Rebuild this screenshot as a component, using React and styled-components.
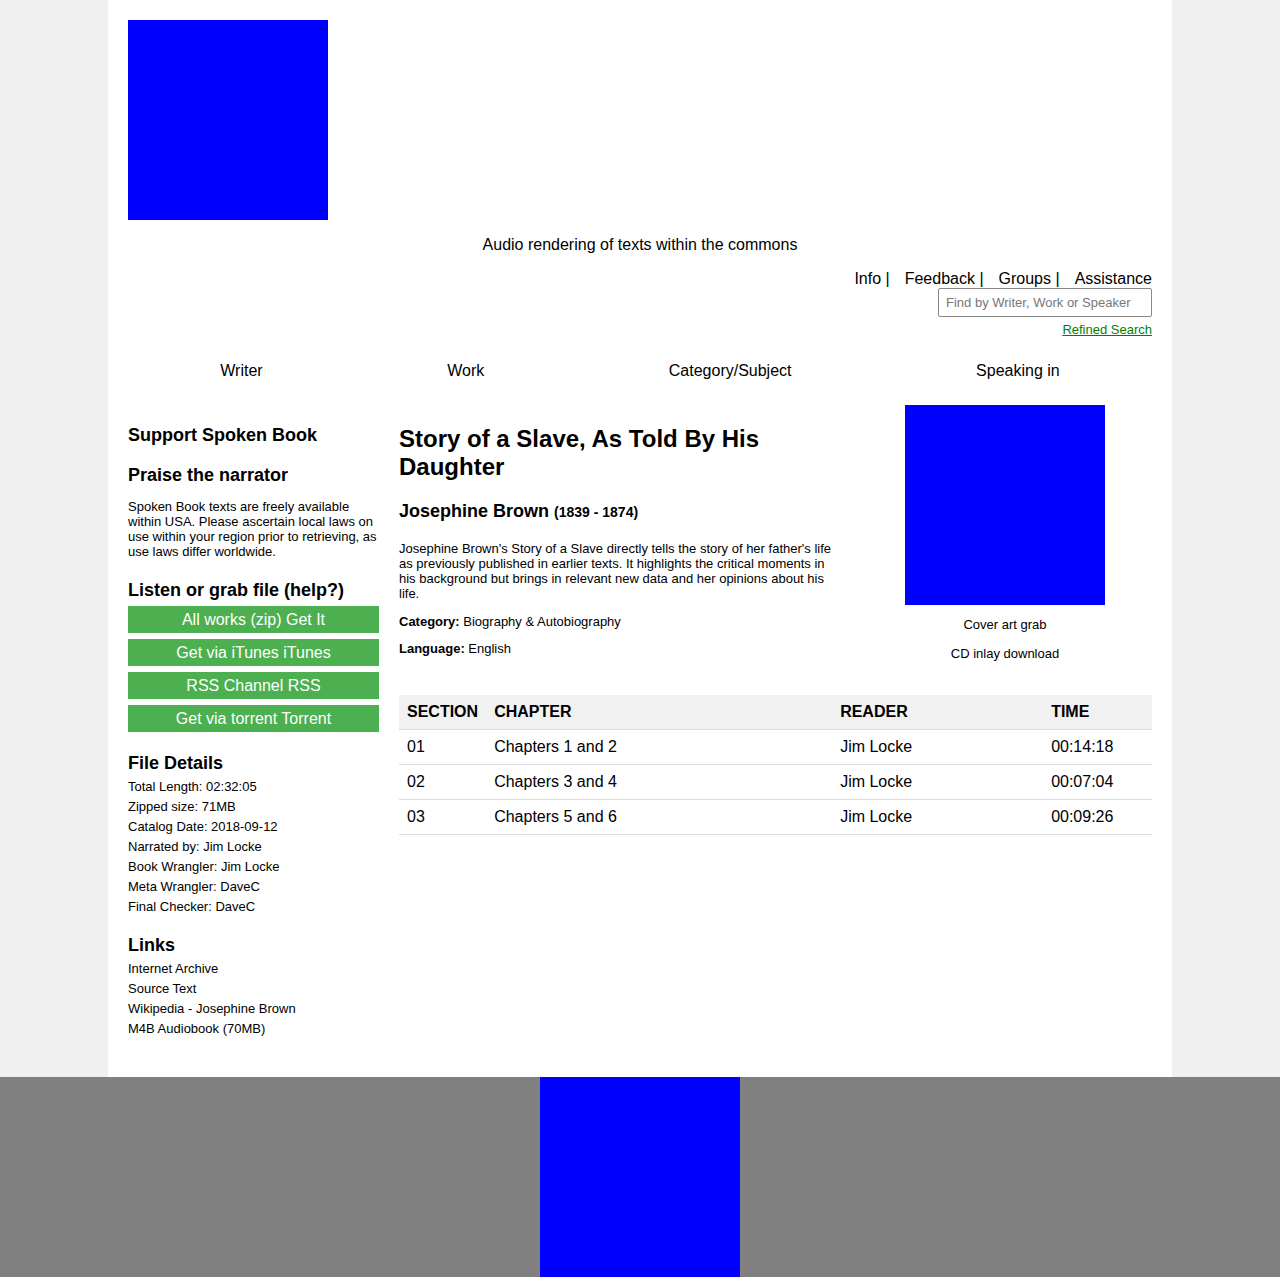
import styled, { createGlobalStyle } from 'styled-components';

const GlobalStyle = createGlobalStyle`
  body {
    margin: 0;
    background: #f0f0f0;
    font-family: "Liberation Sans", Arial, sans-serif;
    color: #000;
  }
`;

const sections = [
  { id: '01', chapter: 'Chapters 1 and 2', reader: 'Jim Locke', time: '00:14:18' },
  { id: '02', chapter: 'Chapters 3 and 4', reader: 'Jim Locke', time: '00:07:04' },
  { id: '03', chapter: 'Chapters 5 and 6', reader: 'Jim Locke', time: '00:09:26' },
];

const fileDetails = [
  'Total Length: 02:32:05',
  'Zipped size: 71MB',
  'Catalog Date: 2018-09-12',
  'Narrated by: Jim Locke',
  'Book Wrangler: Jim Locke',
  'Meta Wrangler: DaveC',
  'Final Checker: DaveC',
];

const links = ['Internet Archive', 'Source Text', 'Wikipedia - Josephine Brown', 'M4B Audiobook (70MB)'];

const downloads = ['All works (zip) Get It', 'Get via iTunes iTunes', 'RSS Channel RSS', 'Get via torrent Torrent'];

export default function App() {
  return (
    <>
      <GlobalStyle />
      <Page>
        <Header>
          <Logo />
          <Tagline>Audio rendering of texts within the commons</Tagline>
          <TopNav>
            <NavLink>Info |</NavLink>
            <NavLink>Feedback |</NavLink>
            <NavLink>Groups |</NavLink>
            <NavLink>Assistance</NavLink>
          </TopNav>
          <SearchInput type="text" placeholder="Find by Writer, Work or Speaker" />
          <RefinedLink href="#">Refined Search</RefinedLink>
          <BrowseNav>
            <span>Writer</span>
            <span>Work</span>
            <span>Category/Subject</span>
            <span>Speaking in</span>
          </BrowseNav>
        </Header>

        <Content>
          <Sidebar>
            <SideTitle $top={20}>Support Spoken Book</SideTitle>
            <SideTitle $top={19}>Praise the narrator</SideTitle>
            <Notice>
              Spoken Book texts are freely available within USA. Please ascertain local laws on
              use within your region prior to retrieving, as use laws differ worldwide.
            </Notice>
            <SideTitle $top={21}>Listen or grab file (help?)</SideTitle>
            <Buttons>
              {downloads.map((d) => (
                <GreenButton key={d}>{d}</GreenButton>
              ))}
            </Buttons>
            <SideTitle $top={21}>File Details</SideTitle>
            <InfoList>
              {fileDetails.map((d) => (
                <li key={d}>{d}</li>
              ))}
            </InfoList>
            <SideTitle $top={18}>Links</SideTitle>
            <InfoList>
              {links.map((l) => (
                <li key={l}>{l}</li>
              ))}
            </InfoList>
          </Sidebar>

          <Main>
            <BookRow>
              <BookInfo>
                <BookTitle>Story of a Slave, As Told By His Daughter</BookTitle>
                <Author>
                  Josephine Brown <small>(1839 - 1874)</small>
                </Author>
                <Description>
                  Josephine Brown's Story of a Slave directly tells the story of her father's life
                  as previously published in earlier texts. It highlights the critical moments in
                  his background but brings in relevant new data and her opinions about his life.
                </Description>
                <Meta $top={13}>
                  <b>Category:</b> Biography &amp; Autobiography
                </Meta>
                <Meta $top={12}>
                  <b>Language:</b> English
                </Meta>
              </BookInfo>
              <CoverColumn>
                <Cover />
                <CoverLink $top={12}>Cover art grab</CoverLink>
                <CoverLink $top={14}>CD inlay download</CoverLink>
              </CoverColumn>
            </BookRow>

            <Table>
              <colgroup>
                <col width="87" />
                <col width="346" />
                <col width="211" />
                <col />
              </colgroup>
              <thead>
                <tr>
                  <Th>Section</Th>
                  <Th>Chapter</Th>
                  <Th>Reader</Th>
                  <Th>Time</Th>
                </tr>
              </thead>
              <tbody>
                {sections.map((s) => (
                  <tr key={s.id}>
                    <Td>{s.id}</Td>
                    <Td>{s.chapter}</Td>
                    <Td>{s.reader}</Td>
                    <Td>{s.time}</Td>
                  </tr>
                ))}
              </tbody>
            </Table>
          </Main>
        </Content>
      </Page>
      <Footer>
        <FooterLogo />
      </Footer>
    </>
  );
}

//============= Styled Components =============
const Page = styled.div`
  width: 1024px;
  margin: 0 auto;
  padding: 20px 20px 38px;
  background: #fff;
`;

const Header = styled.header`
  display: flex;
  flex-direction: column;
`;

const Logo = styled.div`
  width: 200px;
  height: 200px;
  background: #0000ff;
`;

const Tagline = styled.div`
  margin-top: 16px;
  font-size: 16px;
  line-height: 18px;
  text-align: center;
`;

const TopNav = styled.nav`
  display: flex;
  justify-content: flex-end;
  gap: 15px;
  margin-top: 16px;
  font-size: 16px;
  line-height: 18px;
`;

const NavLink = styled.span`
  white-space: pre;
`;

const SearchInput = styled.input`
  align-self: flex-end;
  box-sizing: border-box;
  width: 214px;
  height: 29px;
  margin: 0;
  padding: 0 7px;
  border: 1px solid #888;
  border-radius: 2px;
  font-family: inherit;
  font-size: 13px;
  &::placeholder {
    color: #777;
  }
`;

const RefinedLink = styled.a`
  align-self: flex-end;
  margin-top: 5px;
  font-size: 13px;
  line-height: 15px;
  color: #008000;
  text-decoration: underline;
`;

const BrowseNav = styled.nav`
  display: flex;
  justify-content: space-around;
  margin-top: 25px;
  font-size: 16px;
  line-height: 18px;
`;

const Content = styled.div`
  display: grid;
  grid-template-columns: 251px 1fr;
  gap: 20px;
  margin-top: 25px;
`;

const Sidebar = styled.aside`
  display: flex;
  flex-direction: column;
`;

const SideTitle = styled.h3`
  margin: ${(p) => p.$top}px 0 0;
  font-size: 18px;
  line-height: 21px;
  font-weight: bold;
`;

const Notice = styled.p`
  margin: 13px 0 0;
  font-size: 13px;
  line-height: 15px;
`;

const Buttons = styled.div`
  display: flex;
  flex-direction: column;
  gap: 6px;
  margin-top: 5px;
`;

const GreenButton = styled.button`
  height: 27px;
  padding: 0;
  border: none;
  background: #4caf50;
  color: #fff;
  font-family: inherit;
  font-size: 16px;
  cursor: pointer;
`;

const InfoList = styled.ul`
  list-style: none;
  margin: 3px 0 0;
  padding: 0;
  font-size: 13px;
  line-height: 20px;
`;

const Main = styled.main`
  display: flex;
  flex-direction: column;
`;

const BookRow = styled.div`
  display: grid;
  grid-template-columns: 1fr 294px;
  gap: 20px;
`;

const BookInfo = styled.div`
  display: flex;
  flex-direction: column;
`;

const BookTitle = styled.h2`
  margin: 20px 0 0;
  font-size: 24px;
  line-height: 28px;
  font-weight: bold;
`;

const Author = styled.h3`
  margin: 20px 0 0;
  font-size: 18px;
  line-height: 21px;
  font-weight: bold;
  small {
    font-size: 14px;
  }
`;

const Description = styled.p`
  margin: 18px 0 0;
  font-size: 13px;
  line-height: 15px;
`;

const Meta = styled.p`
  margin: ${(p) => p.$top}px 0 0;
  font-size: 13px;
  line-height: 15px;
`;

const CoverColumn = styled.div`
  display: flex;
  flex-direction: column;
  align-items: center;
`;

const Cover = styled.div`
  width: 200px;
  height: 200px;
  background: #0000ff;
`;

const CoverLink = styled.div`
  margin-top: ${(p) => p.$top}px;
  font-size: 13px;
  line-height: 15px;
`;

const Table = styled.table`
  width: 100%;
  margin-top: 34px;
  border-collapse: collapse;
  font-size: 16px;
  line-height: 18px;
  text-align: left;
`;

const Th = styled.th`
  padding: 8px;
  background: #f1f1f1;
  border-bottom: 1px solid #ddd;
  text-transform: uppercase;
  font-weight: bold;
`;

const Td = styled.td`
  padding: 8px;
  border-bottom: 1px solid #ddd;
`;

const Footer = styled.footer`
  display: flex;
  justify-content: center;
  background: #808080;
`;

const FooterLogo = styled.div`
  width: 200px;
  height: 200px;
  background: #0000ff;
`;
